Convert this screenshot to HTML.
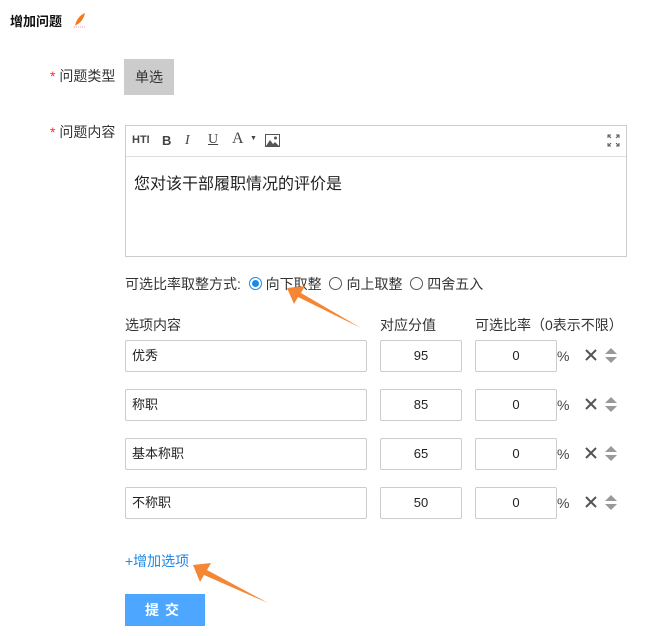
<!DOCTYPE html><html><head><meta charset="utf-8"><style>
body{margin:0;width:650px;height:636px;background:#fff;font-family:"Liberation Sans","Noto Sans CJK SC",sans-serif;font-size:14px;color:#333;position:relative;overflow:hidden}
.a{position:absolute;white-space:nowrap}
.in{position:absolute;border:1px solid #ccc;border-radius:2px;box-sizing:border-box;height:32px;line-height:30px;font-size:13px;color:#222}
.r{display:inline-block;width:13px;height:13px;border:1px solid #555;border-radius:50%;box-sizing:border-box;vertical-align:-1px;margin-right:4px;position:relative}
</style></head><body>
<div class="a" style="left:10px;top:11px;font-weight:bold;font-size:13px;color:#111">增加问题</div>
<svg class="a" style="left:72px;top:12px" width="16" height="16" viewBox="0 0 16 16"><path d="M3 14 C4 8 8 3 13 1 C12 6 9 11 4 13 Z" fill="#f47920"/><path d="M2 15h12" stroke="#f9a" stroke-width="1" stroke-dasharray="1 1"/></svg>
<div class="a" style="left:50px;top:66px"><span style="color:#e33">*</span> 问题类型</div>
<div class="a" style="left:124px;top:59px;width:50px;height:36px;background:#ccc;line-height:36px;text-align:center">单选</div>
<div class="a" style="left:50px;top:122px"><span style="color:#e33">*</span> 问题内容</div>
<div class="a" style="left:125px;top:125px;width:502px;height:132px;border:1px solid #ccc;box-sizing:border-box">
<div style="height:30px;border-bottom:1px solid #ddd;position:relative;font-size:13px;color:#444">
<span class="a" style="left:6px;top:8px;font-size:11px;font-weight:bold;width:17px;overflow:hidden">HTML</span>
<span class="a" style="left:36px;top:7px;font-weight:bold">B</span>
<span class="a" style="left:59px;top:7px;font-style:italic;font-family:'Liberation Serif',serif;font-size:14px">I</span>
<span class="a" style="left:82px;top:6px;text-decoration:underline;font-family:'Liberation Serif',serif;font-size:14px">U</span>
<span class="a" style="left:106px;top:4px;font-family:'Liberation Serif',serif;font-size:16px">A</span><span class="a" style="left:124px;top:9px;font-size:7px">▼</span>
<svg class="a" style="left:139px;top:8px" width="15" height="13"><rect x="0.5" y="0.5" width="14" height="12" fill="none" stroke="#555"/><path d="M1 12 L5 6 L8 10 L10 8 L14 12Z" fill="#555"/><circle cx="10.5" cy="4" r="1.5" fill="#555"/></svg>
<svg class="a" style="left:481px;top:8px" width="13" height="13" stroke="#555" fill="none"><path d="M1 4V1h3M9 1h3v3M12 9v3H9M4 12H1V9M1 1l3 3M12 1l-3 3M12 12l-3-3M1 12l3-3"/></svg>
</div>
<div style="padding:13px 8px;font-size:16px;color:#222">您对该干部履职情况的评价是</div></div>
<div class="a" style="left:125px;top:274px">可选比率取整方式: &nbsp;<span class="r" style="border-color:#1e88e5"><span style="position:absolute;left:2px;top:2px;width:7px;height:7px;border-radius:50%;background:#1e88e5"></span></span>向下取整 &nbsp;<span class="r"></span>向上取整 &nbsp;<span class="r"></span>四舍五入</div>
<div class="a" style="left:125px;top:315px">选项内容</div>
<div class="a" style="left:380px;top:315px">对应分值</div>
<div class="a" style="left:475px;top:315px">可选比率（0表示不限）</div>
<div class="in" style="left:125px;top:340px;width:242px;padding-left:6px">优秀</div><div class="in" style="left:380px;top:340px;width:82px;text-align:center">95</div><div class="in" style="left:475px;top:340px;width:82px;text-align:center">0</div>
<div class="in" style="left:125px;top:389px;width:242px;padding-left:6px">称职</div><div class="in" style="left:380px;top:389px;width:82px;text-align:center">85</div><div class="in" style="left:475px;top:389px;width:82px;text-align:center">0</div>
<div class="in" style="left:125px;top:438px;width:242px;padding-left:6px">基本称职</div><div class="in" style="left:380px;top:438px;width:82px;text-align:center">65</div><div class="in" style="left:475px;top:438px;width:82px;text-align:center">0</div>
<div class="in" style="left:125px;top:487px;width:242px;padding-left:6px">不称职</div><div class="in" style="left:380px;top:487px;width:82px;text-align:center">50</div><div class="in" style="left:475px;top:487px;width:82px;text-align:center">0</div>
<svg class="a" style="left:555px;top:340px" width="70" height="180">
<g id="g"><text x="2" y="21" font-size="14" fill="#444" font-family="Liberation Sans">%</text><path d="M31 10l10 10M41 10l-10 10" stroke="#555" stroke-width="2"/><path d="M50 14l6-6 6 6zM50 17l6 6 6-6z" fill="#999"/></g>
<use href="#g" y="49"/><use href="#g" y="98"/><use href="#g" y="147"/></svg>
<div class="a" style="left:125px;top:551px;color:#1e88e5;font-size:14px">+增加选项</div>
<div class="a" style="left:125px;top:594px;width:80px;height:32px;background:#4da6ff;color:#fff;font-weight:bold;line-height:32px;text-align:center;font-size:14px;letter-spacing:6px">提交</div>
<svg class="a" style="left:0;top:0" width="650" height="636"><path d="M287 288 L305 286 L301 293 L361 328 L298 297 L294 304Z" fill="#f58634"/><path d="M193 565 L211 563 L207 570 L268 603 L204 575 L200 582Z" fill="#f58634"/></svg>
</body></html>
